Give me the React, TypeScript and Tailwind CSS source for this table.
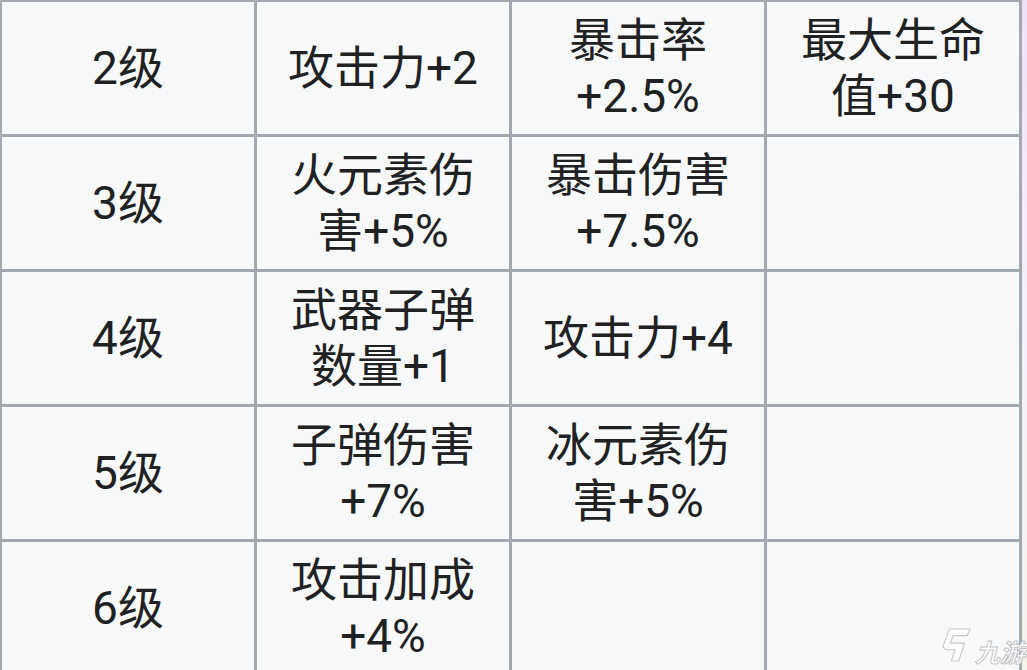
// 等级加成表 (wiki 风格)
const rows: string[][] = [
  ["2级", "攻击力+2", "暴击率+2.5%", "最大生命值+30"],
  ["3级", "火元素伤害+5%", "暴击伤害+7.5%", ""],
  ["4级", "武器子弹数量+1", "攻击力+4", ""],
  ["5级", "子弹伤害+7%", "冰元素伤害+5%", ""],
  ["6级", "攻击加成+4%", "", ""],
];

function Watermark() {
  return (
    <div className="pointer-events-none absolute right-[2px] bottom-[6px] flex items-end gap-[3px]">
      <svg width="32" height="36" viewBox="0 0 34 38" className="mb-[1px]">
        <path
          d="M10 2 L32 2 L29 9 L14 9 L11 17 L26 17 L20 36 L12 36 L16 24 L7 24 L3 21 Z"
          fill="#ffffff"
          fillOpacity="0.85"
          stroke="#c9c9cc"
          strokeWidth="1.2"
          strokeLinejoin="round"
        />
      </svg>
      <span
        className="text-[25px] leading-none font-bold italic text-white/90 [-webkit-text-stroke:1px_#c4c4c8]"
        style={{ fontFamily: '"Noto Sans CJK SC", sans-serif' }}
      >
        九游
      </span>
    </div>
  );
}

export default function App() {
  return (
    <div className="relative h-[670px] w-[1027px] overflow-hidden bg-gradient-to-b from-[#efe2f7] via-[#f6eefa] to-[#f4f1e8]">
      <div className="grid w-[1022px] grid-cols-[252px_252px_252px_252px] auto-rows-[132px] gap-[3px] bg-[#a2a9b1] pt-[2px] pr-[3px] pb-[3px] pl-[2px]">
        {rows.map((row, i) =>
          row.map((cell, j) => (
            <div
              key={`${i}-${j}`}
              className="flex items-center justify-center bg-[#f8f9fa] px-[20px] text-center text-[46px] leading-[56px] text-[#202122]"
              style={{ fontFamily: 'Roboto, "Noto Sans CJK SC", sans-serif' }}
            >
              {cell}
            </div>
          ))
        )}
      </div>
      <Watermark />
    </div>
  );
}
